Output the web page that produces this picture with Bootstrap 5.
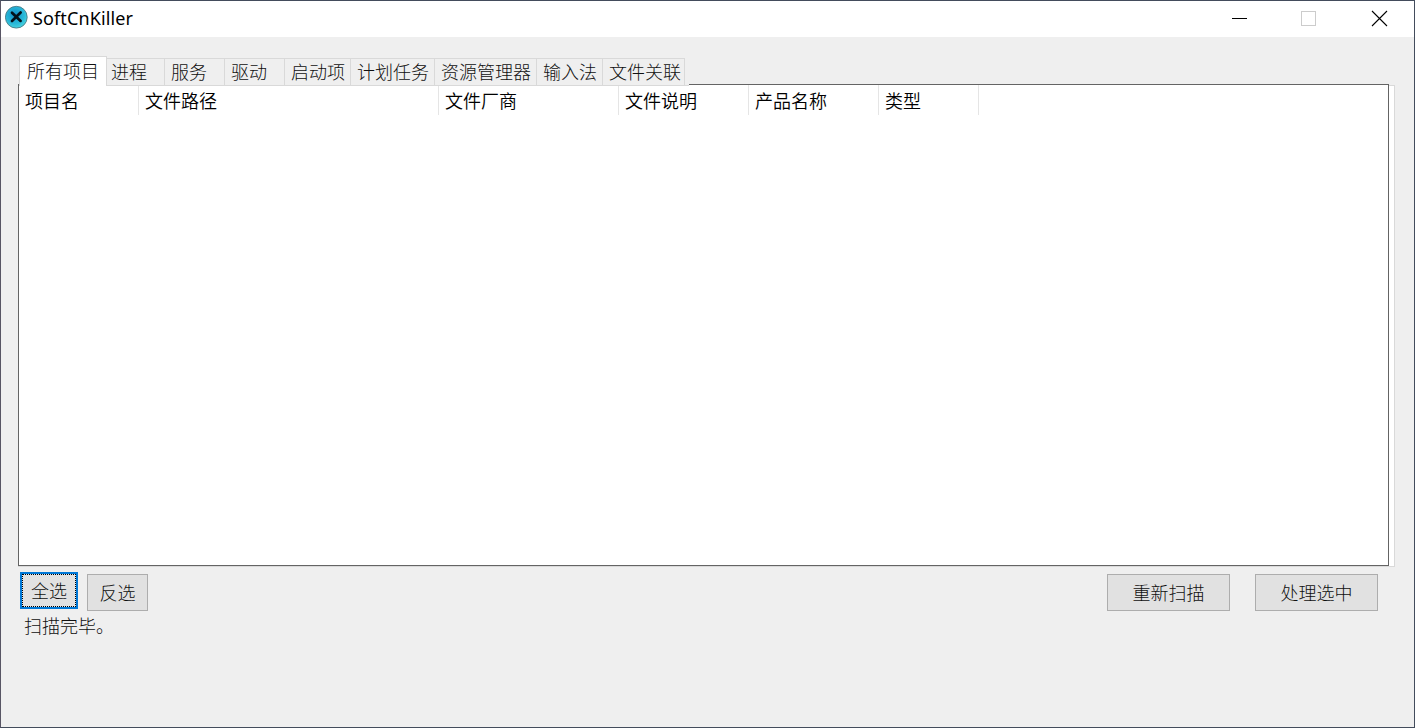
<!DOCTYPE html>
<html lang="zh-CN">
<head>
<meta charset="utf-8">
<meta name="viewport" content="width=device-width, initial-scale=1">
<title>SoftCnKiller</title>
<link href="https://cdn.jsdelivr.net/npm/bootstrap@5.3.0/dist/css/bootstrap.min.css" rel="stylesheet">
<style>
body{font-family:"Noto Sans CJK SC","Liberation Sans",sans-serif;font-size:18px;line-height:26px;color:#000}
.win{height:100vh;background:#efefef;border:1px solid #434c5c;border-left-color:#585564}
.titlebar{height:36px;padding-left:4px}
.app-name{font-family:"Noto Sans","Open Sans",sans-serif;font-size:18px;line-height:34px;margin-left:4px;letter-spacing:.13px}
.caption-btn{width:70px;height:36px}
.thin{color:#101010;font-weight:300;white-space:nowrap}
.body-area{padding:19px 20px 0 17px}
.tabs{height:30px;position:relative;z-index:1;width:671px;padding-left:1px;flex-wrap:nowrap}
.tabs::after{content:"";align-self:flex-end;flex:1;height:2px;background:#d9d9d9;border-top:1px solid #efefef}
.tabs .nav-link{height:28px;padding:0 0 0 6px;border:1px solid #d9d9d9;border-left:0;border-radius:0;background:#efefef;color:#101010;line-height:25px;text-align:left}
.tabs .nav-link.active{height:30px;border-left:1px solid #d9d9d9;border-bottom:0;background:#fff;padding-left:7px;line-height:26px}
.tab-page{margin-top:-1px;background:#fff;border:1px solid #d9d9d9;border-left:0;height:482px;width:1377px}
.list-box{margin-top:-2px;width:1371px;height:482px;background:#fff;border:1px solid #646464}
.head-cell{height:30px;padding-left:6px;line-height:30px;font-weight:350;border-right:1px solid #e5e5e5;white-space:nowrap}
.push{height:37px;padding:0;border:1px solid #adadad;border-radius:0;background:#e1e1e1;font-size:18px;line-height:32px}
.push.thin{padding-bottom:2px}
.push.focused.thin{border:2px solid #0078d7;padding:0;line-height:30px}
.push.focused span{display:block;height:33px;border:1px dotted #000}
</style>
</head>
<body>
<div class="win overflow-hidden">
  <header class="titlebar d-flex bg-white">
    <svg class="mt-1" width="24" height="24" viewBox="0 0 24 24">
      <defs><radialGradient id="orb" cx=".43" cy=".38" r=".65"><stop offset="0" stop-color="#128fc7"/><stop offset=".65" stop-color="#29b9d9"/><stop offset="1" stop-color="#4bd5df"/></radialGradient></defs>
      <circle cx="11.3" cy="12.2" r="10.9" fill="url(#orb)" stroke="#46707a" stroke-width=".8"/>
      <path d="M7 7.7l8.600 8.200M15.600 7.500L7 16" stroke="#03101a" stroke-width="2.7" stroke-linecap="round"/>
    </svg>
    <span class="app-name">SoftCnKiller</span>
    <div class="d-flex ms-auto">
      <svg class="caption-btn" viewBox="0 0 70 36" shape-rendering="crispEdges"><path d="M28 17.500h15" stroke="#000"/></svg>
      <svg class="caption-btn" viewBox="0 0 70 36" shape-rendering="crispEdges"><path d="M27.500 10.500h14v14h-14z" fill="none" stroke="#ccc"/></svg>
      <svg class="caption-btn" viewBox="0 0 70 36"><path d="M28 10l15 15M43 10L28 25" stroke="#000" stroke-width="1.1"/></svg>
    </div>
  </header>
  <main class="body-area">
    <nav class="nav tabs thin">
      <a class="nav-link active" style="width:88px">所有项目</a>
      <a class="nav-link align-self-end" style="width:58px;padding-left:4px">进程</a>
      <a class="nav-link align-self-end" style="width:60px">服务</a>
      <a class="nav-link align-self-end" style="width:60px">驱动</a>
      <a class="nav-link align-self-end" style="width:66px">启动项</a>
      <a class="nav-link align-self-end" style="width:84px">计划任务</a>
      <a class="nav-link align-self-end" style="width:102px">资源管理器</a>
      <a class="nav-link align-self-end" style="width:66px">输入法</a>
      <a class="nav-link align-self-end" style="width:82px">文件关联</a>
    </nav>
    <section class="tab-page">
      <div class="list-box">
        <div class="d-flex">
          <div class="head-cell" style="width:120px">项目名</div>
          <div class="head-cell" style="width:300px">文件路径</div>
          <div class="head-cell" style="width:180px">文件厂商</div>
          <div class="head-cell" style="width:130px">文件说明</div>
          <div class="head-cell" style="width:130px">产品名称</div>
          <div class="head-cell" style="width:100px">类型</div>
        </div>
      </div>
    </section>
    <div class="d-flex thin" style="padding:5px 16px 0 2px">
      <button class="btn push focused thin" style="width:58px"><span>全选</span></button>
      <button class="btn push thin" style="width:61px;margin:2px 0 0 9px">反选</button>
      <button class="btn push thin ms-auto" style="width:123px;margin-top:2px">重新扫描</button>
      <button class="btn push thin" style="width:123px;margin:2px 0 0 25px">处理选中</button>
    </div>
    <div class="thin" style="padding:1px 0 0 6px">扫描完毕。</div>
  </main>
</div>
<script src="https://cdn.jsdelivr.net/npm/bootstrap@5.3.0/dist/js/bootstrap.bundle.min.js"></script>
</body>
</html>
